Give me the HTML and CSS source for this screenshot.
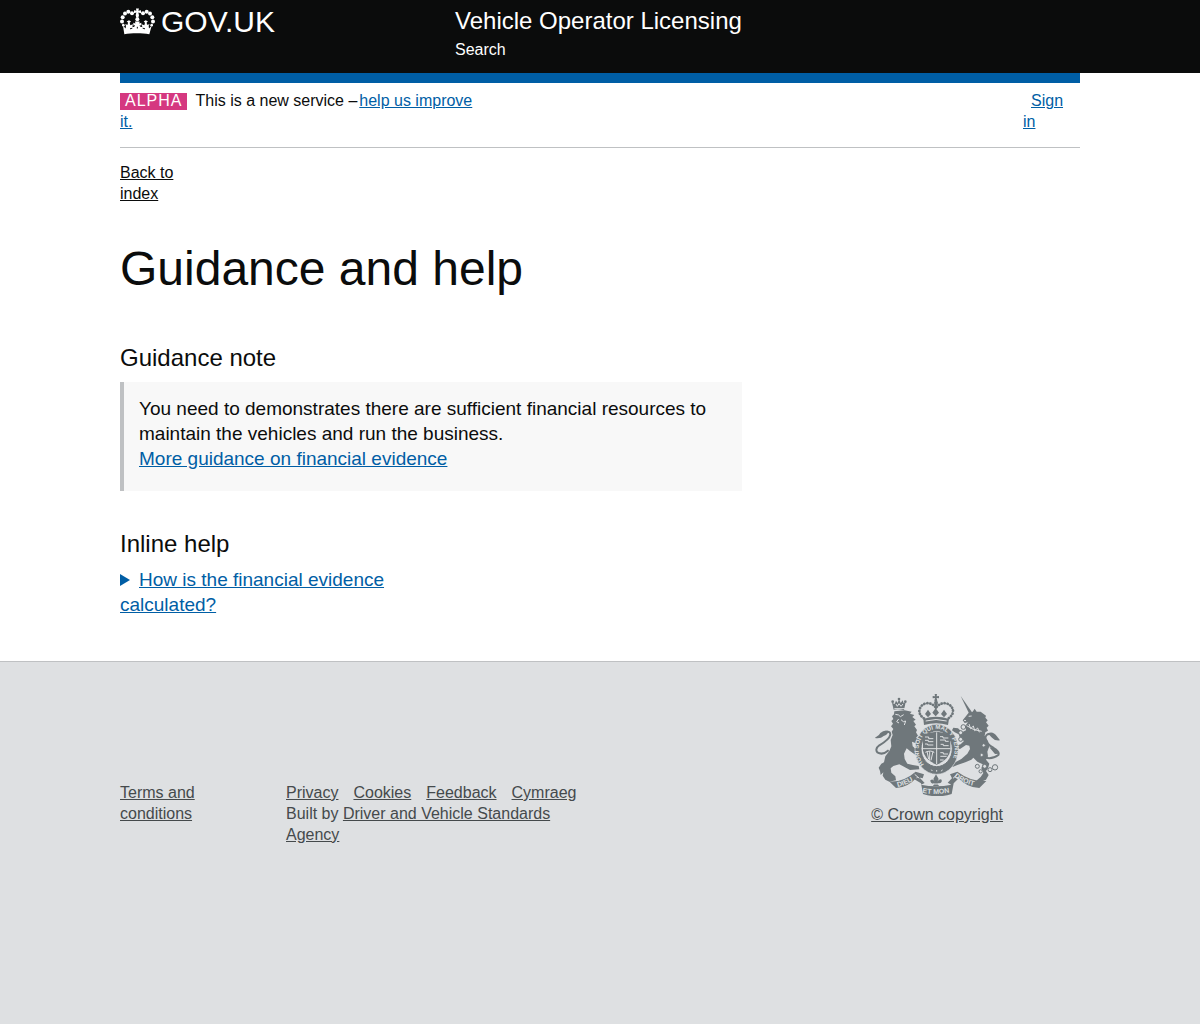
FILE: index.html
```html
<!DOCTYPE html>
<html lang="en">
<head>
<meta charset="utf-8">
<meta name="viewport" content="width=device-width, initial-scale=1">
<title>Guidance and help</title>
<link rel="stylesheet" href="styles.css">
</head>
<body>
<header class="header">
  <div class="container header-inner">
    <a class="logo" href="#">
      <svg class="logo-crown" viewBox="30 23 105 80" aria-hidden="true" fill="currentColor">
        <path d="M78 24h9l-2 7 8-2v9l-8-2 2 8-2 8h-6l-2-8 2-8-7 2v-9l7 2z"/>
        <g><circle cx="66" cy="38" r="6"/><circle cx="55" cy="34" r="6"/><circle cx="45" cy="39" r="6"/><circle cx="38" cy="50" r="6"/><circle cx="36" cy="63" r="6"/><circle cx="40" cy="74" r="4"/><circle cx="99" cy="38" r="6"/><circle cx="110" cy="34" r="6"/><circle cx="120" cy="39" r="6"/><circle cx="127" cy="50" r="6"/><circle cx="129" cy="63" r="6"/><circle cx="125" cy="74" r="4"/><circle cx="82" cy="56" r="6"/></g>
        <path d="M39 76l8 8 1-8-3-5 8 2 1-7-4-3 7-4 6 4-4 4 2 7 8-3-2 8c4 1 8-1 8-5l-5 1v-8l6 2-1-6h14l-1 6 6-2v8l-5-1c0 4 4 6 8 5l-2-8 8 3 2-7-4-4 6-4 7 4-4 3 1 7 8-2-3 5 1 8 8-8-7 25c-22-4-54-4-75 0z"/>
        <path d="M60 85l7-2M98 83l7 2M82 79v5" fill="none" stroke="#0b0c0c" stroke-width="3"/>
      </svg>
      <span>GOV.UK</span>
    </a>
    <div>
      <div class="service-name">Vehicle Operator Licensing</div>
      <nav><a class="header-link" href="#">Search</a></nav>
    </div>
  </div>
</header>
<main class="container main">
  <div class="banner">
    <p class="banner-text"><strong class="tag">ALPHA</strong>This is a new service –<a class="feedback" href="#">help us improve it.</a></p>
    <a class="sign-in" href="#">Sign in</a>
  </div>
  <a class="back-link" href="#">Back to index</a>
  <h1>Guidance and help</h1>
  <div class="content">
    <section>
      <h2>Guidance note</h2>
      <div class="note">
        <p>You need to demonstrates there are sufficient financial resources to maintain the vehicles and run the business.</p>
        <a href="#">More guidance on financial evidence</a>
      </div>
    </section>
    <section>
      <h2>Inline help</h2>
      <details class="help">
        <summary><span>How is the financial evidence calculated?</span></summary>
      </details>
    </section>
  </div>
</main>
<footer class="footer">
  <div class="container footer-inner">
    <div class="footer-terms"><a href="#">Terms and conditions</a></div>
    <div class="footer-links">
      <ul><li><a href="#">Privacy</a></li><li><a href="#">Cookies</a></li><li><a href="#">Feedback</a></li><li><a href="#">Cymraeg</a></li></ul>
      <p>Built by <a href="#">Driver and Vehicle Standards Agency</a></p>
    </div>
    <a class="copyright" href="#">
      <svg class="crest" viewBox="45 24 375 309" aria-hidden="true">
        <defs>
          <path id="garter" d="M192 238A54 62 0 1 1 268 238"/>
          <path id="scroll-left" d="M113 306Q146 299 176 275"/>
          <path id="scroll-mid" d="M187 323Q229 331 278 321"/>
          <path id="scroll-right" d="M282 275Q316 300 356 305"/>
        </defs>
        <!-- lion -->
        <g class="ink">
          <path d="M101 74l-5-21 8 4 4-10 5 7 4-12 5 12 6-8 3 9 6-4-5 25q-15-5-31-2z"/>
          <circle cx="117" cy="42" r="4"/><circle cx="98" cy="50" r="4"/><circle cx="136" cy="50" r="4"/>
          <path d="M103 79L134 76 155 80 150 86 163 90 157 96 167 104 160 108 168 119 163 124 171 135 168 142 174 152 168 158 182 163 184 174 172 176 156 170 158 184 170 194 176 206 166 209 150 198 140 190 132 206 134 222 142 236 158 240 176 243 178 253 150 255 128 243 118 238 100 243 92 250 94 263 106 274 108 286 88 290 76 284 68 272 70 262 62 270 60 258 56 248 64 236 72 232 76 214 88 198 94 184 92 165 98 150 95 140 100 132 93 124 99 116 94 108 100 102 96 94 102 88z"/>
        </g>
        <path class="tail" d="M86 196q-18 16-34 6-8-10 6-21 30-17 33-32 0-10-10-9"/>
        <path class="ink" d="M86 138q-13-5-25 6-3 8-17 15 18 3 27-6 12-3 15-15z"/>
        <path class="cut" d="M106 88l10 2 5 5 10-6M123 104l7 6 7-2-4 12M116 102l-6 8 7 4M103 71h32M108 57l4 7 5-8 6 8 6-7"/>
        <!-- unicorn -->
        <g class="ink">
          <path d="M302 33l34 49-8 5z"/>
          <path d="M326 83L338 80 344 71 350 80 362 80 370 86 378 92 376 98 383 106 378 112 386 122 380 128 384 137 376 142 374 152 384 168 388 184 382 200 384 214 378 224 388 236 384 250 378 258 386 270 378 284 362 291 348 288 362 276 370 264 364 250 368 238 352 230 340 218 334 224 316 232 292 240 278 246 272 238 286 232 304 222 322 206 330 192 328 182 318 180 300 192 286 190 288 182 302 178 312 168 300 160 296 148 284 142 276 136 280 128 294 130 306 142 318 136 316 122 324 112 314 114 308 106z"/>
        </g>
        <path class="tail" d="M376 218q22 5 39-8 5-10-14-21-21-11-25-27 0-16 14-15"/>
        <path class="ink" d="M383 145q16-8 27 8l10 13q-16 2-24-8zM388 187l14 2 16 17-13 1z"/>
        <path class="cut" d="M320 122q18 14 45 17M327 117l5 14 8-8 4 14 9-8 5 13M326 94l9-1M312 106l6 1"/>
        <g class="chain"><circle cx="310" cy="126" r="7"/><circle cx="302" cy="143" r="6"/><circle cx="302" cy="163" r="6"/><circle cx="352" cy="244" r="6"/><circle cx="362" cy="259" r="5"/><circle cx="374" cy="244" r="6"/><circle cx="390" cy="254" r="6"/><circle cx="405" cy="247" r="8"/><circle cx="371" cy="181" r="5"/><circle cx="365" cy="210" r="5"/></g>
        <!-- royal crown -->
        <g class="ink">
          <path d="M224 27h7l-1 7 7-1v7l-7-1 2 9h-9l2-9-7 1v-7l7 1z"/>
          <circle cx="228" cy="53" r="6"/>
          <path d="M190 102q38-13 77 0l-3 18q-36-10-72 0z"/>
          <path d="M204 97l-9-10 9-13 9 13zM227 94l-10-11 10-14 10 14zM252 97l-9-10 9-13 9 13z"/>
        </g>
        <path class="beads" d="M226 66C207 44 179 57 178 78q0 13 15 23M230 66C249 44 278 57 279 78q0 13-15 23M228 58v18"/>
        <path class="cut" d="M197 108q31-9 63 0"/>
        <!-- garter and shield -->
        <ellipse class="ink rim" cx="230" cy="193" rx="65" ry="75"/>
        <ellipse class="ring" cx="230" cy="191" rx="47" ry="54"/>
        <text class="motto garter"><textPath href="#garter">HONI SOIT QUI MAL Y PENSE</textPath></text>
        <path class="ink" d="M189 151q41-21 82 0v45q-4 29-41 43-37-14-41-43z"/>
        <path class="cut" d="M230 142v95M189 191h82M195 156h11v5h14M195 166h10v4h15M195 177h8v3h17M240 155h9v4h16M240 165h16v4h10M242 178h8v4h16M241 203h9v4h14M241 214h19M240 225h11M201 199l5 23M209 199v28M219 199l-6 27M196 202q17-8 27 1M214 254l3 4M230 255v5M247 254l-3 5"/>
        <!-- scroll -->
        <path class="ink" d="M87 289q42 4 80-29l25 8-4 12-16-4q-30 33-64 33zM379 288l-21 21q-36 0-66-33l-16 4-6-12 22-8q42 31 87 28zM163 283l14-7 17 18-11 5q46 9 91 0l-11-6 17-18 14 7-13 13-6 32q-43 14-86 0l-6-32z"/>
        <path class="cut" d="M164 268l14 12M292 268l-13 12"/>
        <path class="ink" d="M228 268l8 14-4 8q6-11 13-6 2 10-8 11l-4 1 4 7h-18l4-7q-12 1-12-10 9-7 13 5l-4-9z"/>
        <path class="cut" d="M219 297h18"/>
        <text class="motto"><textPath href="#scroll-left">DIEU</textPath></text>
        <text class="motto"><textPath href="#scroll-mid">ET MON</textPath></text>
        <text class="motto"><textPath href="#scroll-right">DROIT</textPath></text>
      </svg>
      <span>© Crown copyright</span>
    </a>
  </div>
</footer>
</body>
</html>
```
FILE: styles.css
```css
* { box-sizing: border-box; }

body {
  display: flex;
  flex-direction: column;
  min-height: 100vh;
  margin: 0;
  background: #fff;
  color: #0b0c0c;
  font: 16px/21px "Liberation Sans", Arial, sans-serif;
}

h1, h2, p, ul { margin: 0; padding: 0; font-weight: 400; }
a { color: #005ea5; }

.container {
  width: 100%;
  max-width: 960px;
  margin: 0 auto;
}

.header { background: #0b0c0c; color: #fff; }
.header-inner {
  display: grid;
  grid-template-columns: 335px 1fr;
  padding: 6px 0 13px;
}
.logo {
  display: flex;
  align-items: flex-start;
  gap: 6px;
  color: #fff;
  font-size: 30px;
  line-height: 32px;
  text-decoration: none;
}
.logo-crown { width: 35px; height: 27px; margin-top: 2px; }
.service-name { margin-bottom: 3px; font-size: 24px; line-height: 30px; }
.header-link { color: #fff; text-decoration: none; }

.main { padding-bottom: 44px; border-top: 10px solid #005ea5; }
.banner {
  display: flex;
  justify-content: space-between;
  padding: 7px 0 15px;
  border-bottom: 1px solid #bfc1c3;
}
.banner-text { max-width: 360px; }
.feedback { margin-left: 2px; }
.tag {
  display: inline-block;
  height: 17px;
  margin-right: 8px;
  padding: 0 5px;
  background: #d53880;
  color: #fff;
  font-weight: 400;
  letter-spacing: 1px;
  line-height: 16px;
}
.sign-in { width: 57px; padding-right: 8px; text-indent: 8px; }
.back-link {
  display: block;
  width: 70px;
  margin-top: 14px;
  color: #0b0c0c;
}
h1 { margin: 40px 0 49px; font-size: 48px; line-height: 50px; }
h2 { margin-bottom: 8px; font-size: 24px; line-height: 30px; }

.content {
  display: grid;
  gap: 38px;
  width: 65%;
  padding-right: 2px;
  font-size: 19px;
  line-height: 25px;
}
.note {
  margin-top: 9px;
  padding: 14px 15px 20px;
  border-left: 4px solid #bfc1c3;
  background: #f8f8f8;
}
.help { max-width: 300px; }
.help summary { color: #005ea5; list-style: none; cursor: pointer; }
.help summary span { text-decoration: underline; }
.help summary::before {
  content: "";
  display: inline-block;
  margin-right: 9px;
  border-style: solid;
  border-width: 6px 0 6px 10px;
  border-color: transparent transparent transparent currentColor;
}

.footer {
  flex: 1;
  border-top: 1px solid #bfc1c3;
  background: #dee0e2;
  color: #454a4c;
}
.footer a { color: inherit; }
.footer-inner {
  display: grid;
  grid-template-columns: 166px 300px 1fr;
  padding: 31px 77px 32px 0;
}
.footer-terms, .footer-links { padding-top: 89px; }
.footer-terms { padding-right: 66px; }
.footer ul { display: flex; gap: 15px; list-style: none; }
.copyright {
  display: flex;
  flex-direction: column;
  align-items: center;
  justify-self: end;
  gap: 8px;
}
.crest { width: 125px; height: 103px; }
.ink { fill: #6f777b; }
.rim { stroke: #dee0e2; stroke-width: 2; }
.tail { fill: none; stroke: #6f777b; stroke-width: 6; }
.cut { fill: none; stroke: #dee0e2; stroke-width: 3; }
.chain { fill: #dee0e2; stroke: #6f777b; stroke-width: 3; }
.ring { fill: #dee0e2; stroke: #6f777b; stroke-width: 3; }
.beads {
  fill: none;
  stroke: #6f777b;
  stroke-width: 8;
  stroke-linecap: round;
  stroke-dasharray: 1 8;
}
.motto { fill: #dee0e2; font-size: 21px; font-weight: 700; }
.garter { font-size: 18px; }
```
